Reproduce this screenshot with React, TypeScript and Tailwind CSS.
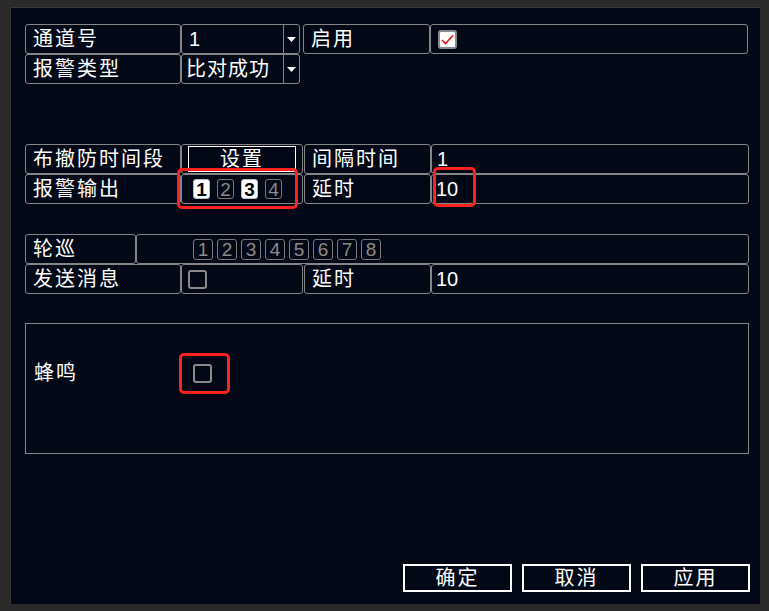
import React from 'react';

const font = { fontFamily: '"Liberation Sans", "Noto Sans CJK SC", sans-serif' };

function Cell({ w, children, className = '' }: { w: string; children?: React.ReactNode; className?: string }) {
  return (
    <div className={`${w} h-[30px] shrink-0 border border-[#858585] rounded-[3px] flex items-center ${className}`}>
      {children}
    </div>
  );
}

function Label({ text }: { text: string }) {
  return <span className="pl-[7px] text-[20px] leading-none tracking-[2px] text-white">{text}</span>;
}

function Arrow() {
  return (
    <div className="w-[16px] h-full border-l border-[#858585] flex items-center justify-center">
      <svg width="9" height="5" viewBox="0 0 9 5"><path d="M0 0H9L4.5 5Z" fill="#fff" /></svg>
    </div>
  );
}

function Box({ n, on, w = 'w-[17px]', h = 'h-[20px]' }: { n: number; on?: boolean; w?: string; h?: string }) {
  return (
    <div
      className={`${w} ${h} rounded-[3px] border flex items-center justify-center text-[19px] leading-none ${
        on ? 'bg-white border-[#bdbdbd] text-black font-bold' : 'border-[#7a7a7a] text-[#8a8a8a]'
      }`}
    >
      {n}
    </div>
  );
}

function Check({ checked }: { checked?: boolean }) {
  return (
    <div
      className={`w-[19px] h-[19px] rounded-[3px] border-2 border-[#8a8a8a] flex items-center justify-center ${
        checked ? 'bg-white' : ''
      }`}
    >
      {checked && (
        <svg width="13" height="11" viewBox="0 0 13 11">
          <path d="M1 6L4.5 9.5L12 1.5" stroke="#e01010" strokeWidth="1.6" fill="none" />
        </svg>
      )}
    </div>
  );
}

function Highlight({ className }: { className: string }) {
  return <div className={`absolute border-[3px] border-[#ff2020] rounded-[5px] pointer-events-none ${className}`} />;
}

export default function App() {
  return (
    <div className="w-[769px] h-[611px] bg-[#2a2a2a] pt-[7px] pl-[10px] pr-[9px] pb-[7px] flex" style={font}>
      <div className="relative flex-1 bg-[#020816] border-l border-t border-[#3a3a3a] pl-[14px] pt-[16px] pr-[10px] flex flex-col">
        {/* row 1 */}
        <div className="flex">
          <Cell w="w-[156px]"><Label text="通道号" /></Cell>
          <Cell w="w-[119px]" className="justify-between">
            <span className="pl-[7px] text-[20px] leading-none text-white">1</span>
            <Arrow />
          </Cell>
          <Cell w="w-[127px]" className="ml-[3px]"><Label text="启用" /></Cell>
          <Cell w="w-[318px]" className="pl-[7px]"><Check checked /></Cell>
        </div>
        {/* row 2 */}
        <div className="flex">
          <Cell w="w-[156px]"><Label text="报警类型" /></Cell>
          <Cell w="w-[119px]" className="justify-between">
            <span className="pl-[4px] text-[20px] leading-none tracking-[1px] text-white">比对成功</span>
            <Arrow />
          </Cell>
        </div>

        <div className="h-[60px]" />

        {/* row 3 */}
        <div className="flex">
          <Cell w="w-[156px]"><Label text="布撤防时间段" /></Cell>
          <Cell w="w-[122px]" className="px-[6px]">
            <div className="w-[109px] h-[26px] border border-white flex items-center justify-center text-[20px] leading-none tracking-[2px] text-white">
              设置
            </div>
          </Cell>
          <Cell w="w-[127px]" className="ml-[1px]"><Label text="间隔时间" /></Cell>
          <Cell w="w-[318px]"><span className="pl-[5px] text-[20px] leading-none text-white">1</span></Cell>
        </div>
        {/* row 4 */}
        <div className="flex">
          <Cell w="w-[156px]"><Label text="报警输出" /></Cell>
          <Cell w="w-[122px]" className="pl-[11px] gap-[7px]">
            <Box n={1} on />
            <Box n={2} />
            <Box n={3} on />
            <Box n={4} />
          </Cell>
          <Cell w="w-[127px]" className="ml-[1px]"><Label text="延时" /></Cell>
          <Cell w="w-[318px]"><span className="pl-[4px] text-[20px] leading-none text-white">10</span></Cell>
        </div>

        <div className="h-[30px]" />

        {/* row 5 */}
        <div className="flex">
          <Cell w="w-[111px]"><Label text="轮巡" /></Cell>
          <Cell w="w-[613px]" className="pl-[56px] gap-[4px]">
            {[1, 2, 3, 4, 5, 6, 7, 8].map((n) => (
              <Box key={n} n={n} w="w-[20px]" h="h-[21px]" />
            ))}
          </Cell>
        </div>
        {/* row 6 */}
        <div className="flex">
          <Cell w="w-[156px]"><Label text="发送消息" /></Cell>
          <Cell w="w-[122px]" className="pl-[6px]"><Check /></Cell>
          <Cell w="w-[127px]" className="ml-[1px]"><Label text="延时" /></Cell>
          <Cell w="w-[318px]"><span className="pl-[4px] text-[20px] leading-none text-white">10</span></Cell>
        </div>

        <div className="h-[29px]" />

        {/* buzzer panel */}
        <div className="w-[724px] h-[131px] border border-[#858585] flex items-start pt-[39px]">
          <div className="h-[20px] flex items-center">
            <span className="pl-[8px] w-[167px] text-[20px] leading-none tracking-[2px] text-white">蜂鸣</span>
            <Check />
          </div>
        </div>

        {/* buttons */}
        <div className="mt-auto mb-[12px] flex justify-end gap-[10px]">
          {['确定', '取消', '应用'].map((t) => (
            <button
              key={t}
              className="w-[109px] h-[28px] border-2 border-white flex items-center justify-center text-[20px] leading-none tracking-[2px] text-white"
            >
              {t}
            </button>
          ))}
        </div>

        <Highlight className="left-[166px] top-[160px] w-[121px] h-[41px]" />
        <Highlight className="left-[422px] top-[159px] w-[43px] h-[40px]" />
        <Highlight className="left-[168px] top-[345px] w-[51px] h-[41px]" />
      </div>
    </div>
  );
}
